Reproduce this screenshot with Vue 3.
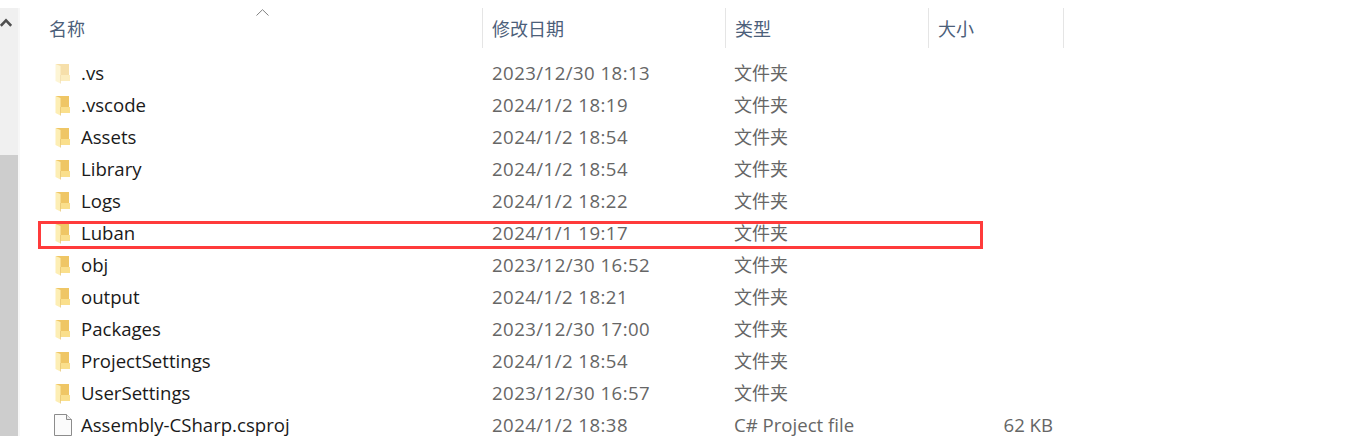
<script setup>
const rows = [
  { name: '.vs', date: '2023/12/30 18:13', type: '文件夹', faded: true },
  { name: '.vscode', date: '2024/1/2 18:19', type: '文件夹' },
  { name: 'Assets', date: '2024/1/2 18:54', type: '文件夹' },
  { name: 'Library', date: '2024/1/2 18:54', type: '文件夹' },
  { name: 'Logs', date: '2024/1/2 18:22', type: '文件夹' },
  { name: 'Luban', date: '2024/1/1 19:17', type: '文件夹' },
  { name: 'obj', date: '2023/12/30 16:52', type: '文件夹' },
  { name: 'output', date: '2024/1/2 18:21', type: '文件夹' },
  { name: 'Packages', date: '2023/12/30 17:00', type: '文件夹' },
  { name: 'ProjectSettings', date: '2024/1/2 18:54', type: '文件夹' },
  { name: 'UserSettings', date: '2023/12/30 16:57', type: '文件夹' },
  { name: 'Assembly-CSharp.csproj', date: '2024/1/2 18:38', type: 'C# Project file', size: '62 KB', file: true }
]
</script>

<template>
  <div class="window">
    <aside class="scrollbar">
      <svg class="arrow" width="12" height="9" viewBox="0 0 12 9">
        <path d="M0.8 7.8 L6 2.4 L11.2 7.8" fill="none" stroke="#4f4f4f" stroke-width="2.6" />
      </svg>
      <div class="thumb"></div>
    </aside>
    <main class="list">
      <header class="head">
        <div class="hcell name-col">名称</div>
        <div class="hcell date-col">修改日期</div>
        <div class="hcell type-col">类型</div>
        <div class="hcell size-col">大小</div>
        <svg class="sort" width="13" height="7" viewBox="0 0 13 7">
          <path d="M0.5 6.5 L6.5 0.7 L12.5 6.5" fill="none" stroke="#808080" stroke-width="1" />
        </svg>
      </header>
      <div class="rows">
        <div v-for="r in rows" :key="r.name" class="row">
          <div class="name-col name">
            <svg v-if="!r.file" class="icon folder" :class="{ faded: r.faded }" width="15" height="21" viewBox="0 0 15 21">
              <path d="M1 1 H14 V13 H1 Z" fill="#efc665" />
              <path d="M5 12 H15 V18 H5 Z" fill="#fadf8c" />
              <path d="M0.5 1 L5.5 3 V20.5 L0.5 18 Z" fill="#fdeeb4" />
              <path d="M5.5 12 V20.5" fill="none" stroke="#e0bb60" stroke-width="0.6" />
            </svg>
            <svg v-else class="icon file" width="18" height="22" viewBox="0 0 18 22">
              <path d="M0.5 0.5 H12.5 L17.5 5.5 V21.5 H0.5 Z" fill="#fbfbfb" stroke="#8c8c8c" />
              <path d="M12.5 0.5 V5.5 H17.5" fill="#ececec" stroke="#8c8c8c" />
            </svg>
            <span class="label">{{ r.name }}</span>
          </div>
          <div class="date-col muted date">{{ r.date }}</div>
          <div class="type-col muted" :class="r.file ? 'latin' : 'cjk'">{{ r.type }}</div>
          <div class="size-col muted size">{{ r.size }}</div>
        </div>
      </div>
    </main>
    <div class="highlight"></div>
  </div>
</template>

<style>
html, body { margin: 0; background: #fff; }
</style>

<style scoped>
.window {
  position: relative;
  display: flex;
  width: 1353px;
  height: 436px;
  overflow: hidden;
  background: #fff;
  font-family: "Open Sans", "Noto Sans CJK SC", sans-serif;
  font-size: 18.6px;
}
.scrollbar {
  position: relative;
  flex: none;
  width: 18px;
  margin-top: 8px;
  margin-right: 3px;
  background: #f0f0f0;
  box-shadow: 2px 0 0 #f7f7f7;
  display: flex;
  flex-direction: column;
  align-items: flex-start;
}
.arrow { margin-top: 10px; flex: none; }
.thumb {
  margin-top: 128px;
  flex: 1;
  width: 100%;
  background: #cdcdcd;
}
.list { flex: 1; min-width: 0; }
.head {
  position: relative;
  display: grid;
  grid-template-columns: 461px 243px 203px 136px;
  margin-top: 8px;
  height: 40px;
}
.hcell {
  display: flex;
  align-items: center;
  padding-left: 9px;
  padding-bottom: 1px;
  color: #4c607a;
  font-size: 18px;
  border-left: 1px solid #e5e5e5;
}
.hcell.name-col { padding-left: 28px; border-left: 0; border-right: 0; }
.hcell.size-col { border-right: 1px solid #e5e5e5; }
.sort { position: absolute; left: 235px; top: 1px; }
.rows { margin-top: 9px; }
.row {
  display: grid;
  grid-template-columns: 461px 243px 203px 136px;
  height: 32px;
  align-items: center;
}
.name {
  display: flex;
  align-items: center;
  padding-left: 34px;
}
.icon { flex: none; }
.folder { margin-right: 11px; }
.file { margin-left: -1px; margin-right: 9px; }
.icon.faded { opacity: 0.55; }
.label { color: #1a1a1a; white-space: nowrap; padding-bottom: 2px; }
.muted { color: #666; white-space: nowrap; padding-left: 10px; padding-bottom: 2px; }
.date { letter-spacing: 0.45px; }
.cjk { font-size: 18px; padding-left: 9px; }
.latin { font-size: 18.6px; padding-left: 9px; }
.size { text-align: right; padding-right: 11px; padding-left: 0; }
.highlight {
  position: absolute;
  left: 38px;
  top: 221px;
  width: 939px;
  height: 22px;
  border: 3px solid #ff3b3b;
  pointer-events: none;
}
</style>
